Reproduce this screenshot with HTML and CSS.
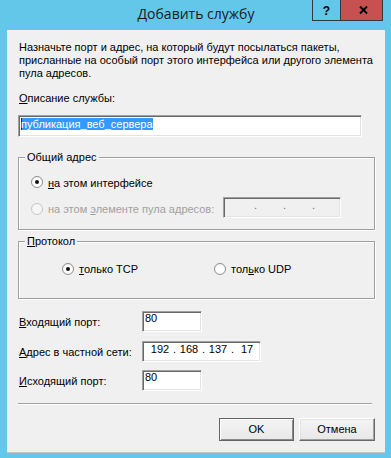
FILE: index.html
```html
<!DOCTYPE html>
<html lang="ru">
<head>
<meta charset="utf-8">
<title>Добавить службу</title>
<link rel="stylesheet" href="styles.css">
</head>
<body>
<div class="window">
  <div class="titlebar">
    <div class="title">Добавить службу</div>
    <div class="caption-buttons">
      <div class="cbtn help">?</div>
      <div class="cbtn close"><svg width="9" height="8" viewBox="0 0 9 8"><path d="M1 0.5 L8 7.5 M8 0.5 L1 7.5" stroke="#000" stroke-width="2"/></svg></div>
    </div>
  </div>
  <div class="client">
    <p class="intro">Назначьте порт и адрес, на который будут посылаться пакеты,<br>присланные на особый порт этого интерфейса или другого элемента<br>пула адресов.</p>
    <div class="desc-label"><u>О</u>писание службы:</div>
    <div class="edit desc"><span class="sel">публикация_веб_сервера</span></div>

    <div class="group g-address">
      <div class="group-title">Общий адрес</div>
      <div class="radio-row r1">
        <span class="radio checked"></span>
        <span class="rtext"><u>н</u>а этом интерфейсе</span>
      </div>
      <div class="radio-row r2">
        <span class="radio disabled"></span>
        <span class="rtext disabled-text r2-label">на этом <u>э</u>лементе пула адресов:</span>
        <div class="ipbox ip-disabled">
          <span class="ipf"></span><span class="ipdot">.</span><span class="ipf"></span><span class="ipdot">.</span><span class="ipf"></span><span class="ipdot">.</span><span class="ipf"></span>
        </div>
      </div>
    </div>

    <div class="group g-proto">
      <div class="group-title"><u>П</u>ротокол</div>
      <div class="radio-row proto-row">
        <div class="proto-item tcp">
          <span class="radio checked"></span>
          <span class="rtext"><u>т</u>олько TCP</span>
        </div>
        <div class="proto-item">
          <span class="radio"></span>
          <span class="rtext">тол<u>ь</u>ко UDP</span>
        </div>
      </div>
    </div>

    <div class="field-row row-in">
      <span class="flabel"><u>В</u>ходящий порт:</span>
      <div class="edit port">80</div>
    </div>
    <div class="field-row row-ip">
      <span class="flabel"><u>А</u>дрес в частной сети:</span>
      <div class="ipbox ip-enabled">
        <span class="ipf">192</span><span class="ipdot">.</span><span class="ipf">168</span><span class="ipdot">.</span><span class="ipf">137</span><span class="ipdot">.</span><span class="ipf">17</span>
      </div>
    </div>
    <div class="field-row row-out">
      <span class="flabel"><u>И</u>сходящий порт:</span>
      <div class="edit port">80</div>
    </div>

    <div class="separator"></div>

    <div class="buttons">
      <div class="btn default">OK</div>
      <div class="btn cancel">Отмена</div>
    </div>
  </div>
</div>
</body>
</html>
```

FILE: styles.css
```css
html, body {
  margin: 0;
  padding: 0;
}

body {
  font-family: "Liberation Sans", Arial, sans-serif;
  font-size: 11px;
  color: #000;
  background: #63c7ea;
}

u {
  text-decoration: underline;
  text-underline-offset: 1px;
}

.window {
  width: 391px;
  height: 458px;
  box-sizing: border-box;
  background: #63c7ea;
  padding: 0 6px 5px 7px;
  display: flex;
  flex-direction: column;
}

/* Title bar */
.titlebar {
  height: 30px;
  flex: none;
  display: grid;
  grid-template-columns: 1fr auto 1fr;
  align-items: start;
}

.title {
  grid-column: 2;
  font-family: "Open Sans", "Noto Sans", sans-serif;
  font-size: 14px;
  line-height: 19px;
  padding-top: 4px;
  color: #1a1a1a;
  white-space: nowrap;
}

.caption-buttons {
  grid-column: 3;
  justify-self: end;
  display: flex;
  margin-right: 2px;
}

.cbtn {
  height: 21px;
  box-sizing: border-box;
  border-bottom: 1px solid #2e3a40;
  border-left: 1px solid #2e3a40;
  display: flex;
  align-items: center;
  justify-content: center;
}

.help {
  width: 28px;
  font-weight: bold;
  font-size: 12px;
  line-height: 12px;
  padding-top: 1px;
}

.close {
  width: 43px;
  background: #c75050;
  border-right: 1px solid #2e3a40;
}

.close svg {
  display: block;
  margin-left: 4px;
}

/* Client area */
.client {
  flex: 1;
  background: #f0f0f0;
  padding: 11px 0 0 11px;
  border-bottom: 1px solid #c4c4c4;
}

.intro {
  margin: 0;
  padding-left: 1px;
  line-height: 13px;
  white-space: nowrap;
}

.desc-label {
  margin-top: 12px;
  padding-left: 1px;
  line-height: 13px;
}

.edit {
  box-sizing: border-box;
  background: #fff;
  border: 1px solid;
  border-color: #a0a0a0 #fff #fff #a0a0a0;
  box-shadow: inset 1px 1px 0 #696969, inset -1px -1px 0 #e3e3e3;
  line-height: 13px;
}

.desc {
  margin-top: 10px;
  width: 344px;
  height: 22px;
  padding: 2px 0 0 2px;
}

.sel {
  background: #3399ff;
  color: #fff;
  box-shadow: inset 1px 0 0 #2a2a2a;
}

/* Group boxes */
.group {
  width: 357px;
  box-sizing: border-box;
  border: 1px solid #a0a0a0;
  box-shadow: inset 1px 1px 0 #fff, 1px 1px 0 #fff;
}

.group-title {
  width: fit-content;
  margin: -7px 0 0 6px;
  padding: 0 2px;
  background: #f0f0f0;
  line-height: 13px;
}

.g-address {
  margin-top: 20px;
  padding-bottom: 11px;
}

.g-proto {
  margin-top: 11px;
  padding-bottom: 22px;
}

.radio-row {
  display: flex;
  align-items: flex-start;
  line-height: 13px;
}

.rtext {
  white-space: nowrap;
}

.radio {
  flex: none;
  width: 12px;
  height: 12px;
  box-sizing: border-box;
  border-radius: 50%;
  border: 1px solid #8f8f8f;
  background: radial-gradient(circle at 50% 60%, #ffffff 50%, #e8e8e8 100%);
  display: flex;
  align-items: center;
  justify-content: center;
  margin-right: 5px;
}

.radio.checked::after {
  content: "";
  width: 4px;
  height: 4px;
  border-radius: 50%;
  background: #111;
}

.radio.disabled {
  border-color: #c6c6c6;
  background: #f6f6f6;
}

.r1 {
  margin-top: 13px;
  padding-left: 12px;
}

.r1 .radio {
  margin-top: -1px;
}

.r2 {
  margin-top: 7px;
  padding-left: 12px;
}

.r2 .radio,
.r2 .rtext {
  margin-top: 6px;
}

.r2-label {
  width: 175px;
}

.disabled-text {
  color: #a0a0a0;
}

.proto-row {
  margin-top: 15px;
  padding-left: 43px;
}

.proto-item {
  display: flex;
  align-items: flex-start;
}

.tcp {
  width: 152px;
}

/* IP address control */
.ipbox {
  box-sizing: border-box;
  height: 21px;
  border: 1px solid;
  border-color: #a0a0a0 #fff #fff #a0a0a0;
  box-shadow: inset 1px 1px 0 #696969, inset -1px -1px 0 #e3e3e3;
  display: flex;
  padding: 1px 0 0 4px;
  line-height: 13px;
  overflow: hidden;
}

.ip-disabled {
  width: 118px;
  background: #f0f0f0;
  color: #6d6d6d;
}

.ip-enabled {
  width: 119px;
  background: #fff;
}

.ipf {
  flex: none;
  width: 26px;
  text-align: center;
}

.ipdot {
  flex: none;
  width: 3px;
  text-align: center;
}

/* Field rows */
.field-row {
  display: flex;
  align-items: flex-start;
  padding-left: 1px;
  line-height: 13px;
}

.flabel {
  width: 123px;
  margin-top: 5px;
  white-space: nowrap;
}

.row-in {
  margin-top: 12px;
}

.row-ip {
  margin-top: 9px;
}

.row-out {
  margin-top: 8px;
}

.port {
  width: 60px;
  height: 21px;
  padding: 1px 0 0 2px;
  line-height: 11px;
}

.separator {
  margin-top: 12px;
  width: 354px;
  height: 0;
  border-top: 1px solid #a0a0a0;
  border-bottom: 1px solid #fff;
}

/* Buttons */
.buttons {
  margin-top: 13px;
  width: 357px;
  display: flex;
  justify-content: flex-end;
  gap: 5px;
}

.btn {
  height: 23px;
  box-sizing: border-box;
  display: flex;
  align-items: center;
  justify-content: center;
  line-height: 13px;
  background: linear-gradient(#f4f4f4, #e8e8e8);
  border: 1px solid;
  border-color: #fff #696969 #696969 #fff;
  box-shadow: inset -1px -1px 0 #a0a0a0, inset 1px 1px 0 #e3e3e3;
}

.btn.default {
  width: 75px;
  border-color: #646464;
  box-shadow: inset 1px 1px 0 #fff, inset -1px -1px 0 #8a8a8a;
}

.btn.cancel {
  width: 76px;
}
```
